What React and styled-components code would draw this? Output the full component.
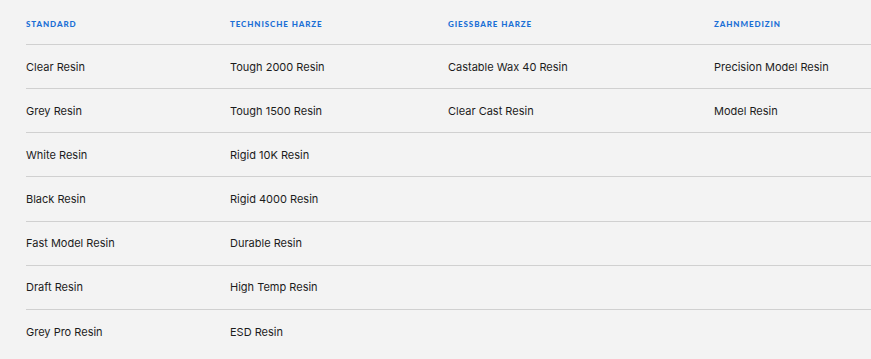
import React from "react";
import styled, { createGlobalStyle } from "styled-components";

const Global = createGlobalStyle`
  html, body { margin: 0; padding: 0; background: #f3f3f3; }
  body { font-family: "Inter", "Liberation Sans", sans-serif; -webkit-font-smoothing: antialiased; }
`;

const Page = styled.div`
  width: 871px;
  height: 359px;
  background: #f3f3f3;
  padding-left: 26px;
  box-sizing: border-box;
  overflow: hidden;
`;

const Grid = styled.div`
  display: grid;
  grid-template-columns: 204px 218px 266px 1fr;
`;

const HeadCell = styled.div`
  height: 44px;
  display: flex;
  align-items: center;
  padding-top: 3px;
  box-sizing: border-box;
  font-family: "Lato", "Liberation Sans", sans-serif;
  font-size: 8px;
  font-weight: 900;
  letter-spacing: 0.9px;
  text-transform: uppercase;
  color: #1b6fd6;
`;

const Cell = styled.div`
  height: 44.17px;
  box-sizing: border-box;
  border-top: 1px solid #d0d0d0;
  display: flex;
  align-items: center;
  font-size: 11px;
  color: #1c1c1c;
`;

const columns = [
  { title: "Standard", items: ["Clear Resin", "Grey Resin", "White Resin", "Black Resin", "Fast Model Resin", "Draft Resin", "Grey Pro Resin"] },
  { title: "Technische Harze", items: ["Tough 2000 Resin", "Tough 1500 Resin", "Rigid 10K Resin", "Rigid 4000 Resin", "Durable Resin", "High Temp Resin", "ESD Resin"] },
  { title: "Giessbare Harze", items: ["Castable Wax 40 Resin", "Clear Cast Resin"] },
  { title: "Zahnmedizin", items: ["Precision Model Resin", "Model Resin"] },
];

const ROWS = 7;

export default function App() {
  return (
    <>
      <Global />
      <Page>
        <Grid>
          {columns.map((c) => (
            <HeadCell key={c.title}>{c.title}</HeadCell>
          ))}
          {Array.from({ length: ROWS }).map((_, r) =>
            columns.map((c, ci) => (
              <Cell key={`${r}-${ci}`}>{c.items[r] || ""}</Cell>
            ))
          )}
        </Grid>
      </Page>
    </>
  );
}
